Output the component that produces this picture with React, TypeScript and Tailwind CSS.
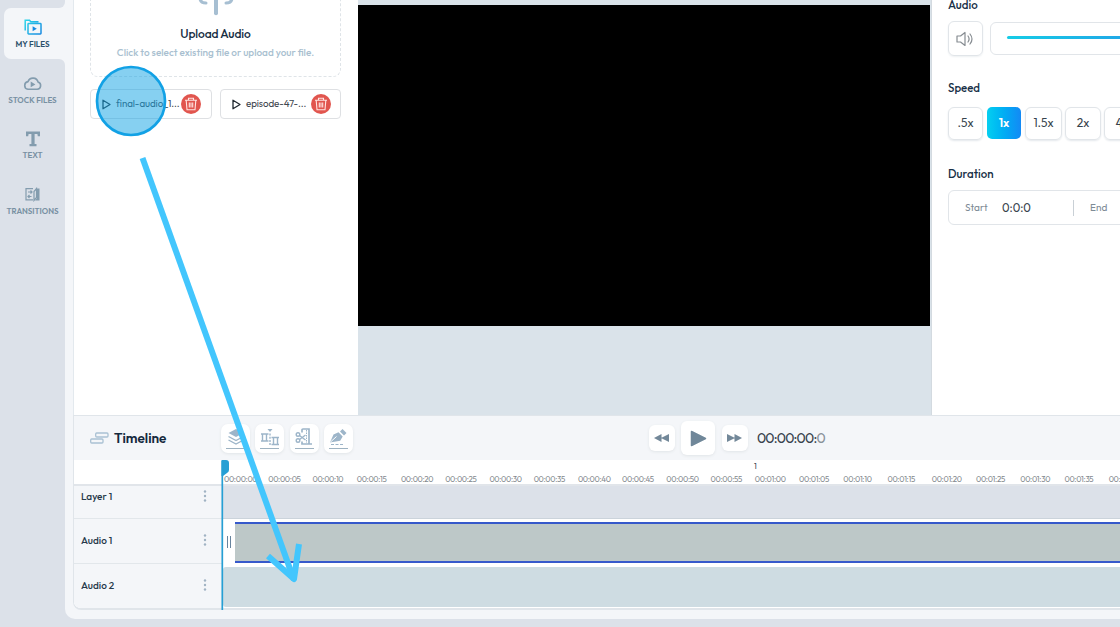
import type { ReactNode } from "react";

const rulerMarks = [
  "00:00:00", "00:00:05", "00:00:10", "00:00:15", "00:00:20", "00:00:25", "00:00:30",
  "00:00:35", "00:00:40", "00:00:45", "00:00:50", "00:00:55", "00:01:00", "00:01:05",
  "00:01:10", "00:01:15", "00:01:20", "00:01:25", "00:01:30", "00:01:35", "00:01:40",
];

function FilesIcon() {
  return (
    <svg width="18" height="16" viewBox="0 0 18 16" fill="none">
      <defs>
        <linearGradient id="files" x1="0" y1="0" x2="18" y2="16" gradientUnits="userSpaceOnUse">
          <stop stopColor="#2fdcea" />
          <stop offset="1" stopColor="#1684e0" />
        </linearGradient>
      </defs>
      <path d="M1.200 11.500V1.200h4.300l1.300 1.500h7.700M4 14.200V5.200q0-.7.700-.7h11.600q.7 0 .7.700v9q0 .7-.7.700H4.700q-.7 0-.7-.7Z" stroke="url(#files)" strokeWidth="1.500" />
      <path d="M8.600 7.200v5l4.200-2.500Z" fill="#1688e2" />
    </svg>
  );
}

function StockIcon() {
  return (
    <svg width="19" height="14" viewBox="0 0 19 14" fill="none">
      <path d="M5 12.300h9.200a3.700 3.700 0 0 0 .9-7.200A5.300 5.300 0 0 0 5 4.600a3.900 3.900 0 0 0 0 7.700Z" stroke="#839cae" strokeWidth="1.600" />
      <path d="M7.700 4.600v5.600l4.700-2.800Z" fill="#839cae" />
    </svg>
  );
}

function TextIcon() {
  return (
    <svg width="14" height="16" viewBox="0 0 14 16" fill="#839cae">
      <path d="M0 .5h14v4.700h-2.200L11.400 3H8.600v10h1.900v2.200h-7V13h1.900V3H2.600l-.4 2.200H0Z" />
    </svg>
  );
}

function TransitionsIcon() {
  return (
    <svg width="15" height="15" viewBox="0 0 15 15" fill="none" stroke="#839cae" strokeWidth="1.200">
      <path d="M8 1.600H1v11.300h7M3 5h4M5.500 3.500 7 5 5.500 6.500M6.500 9.500H3M4.500 8 3 9.500 4.500 11" />
      <path d="M9 13.500v-9l2.500-3v9L9 13.500Z" />
      <path d="M12 1.500h2.500v12H10l2-2.500Z" fill="#839cae" stroke="none" />
    </svg>
  );
}

function SideItem({ icon, label }: { icon: ReactNode; label: string }) {
  return (
    <div className="flex h-[55.5px] flex-col items-center">
      <div className="flex h-4 items-center justify-center">{icon}</div>
      <span className="mt-[3px] text-[8px] leading-[10px] font-semibold whitespace-nowrap text-[#7890a2]">{label}</span>
    </div>
  );
}

function Sidebar() {
  return (
    <aside className="flex h-full w-[65px] shrink-0 flex-col">
      <div className="h-2 rounded-br-[6px] bg-[#dce1e9]" />
      <div className="bg-[#dce1e9] pl-1">
        <div className="flex h-[51px] flex-col items-center rounded-l-[7px] bg-[#f4f6f9] pt-[11px] pr-1">
          <FilesIcon />
          <span className="mt-[4px] text-[8px] leading-[10px] font-semibold whitespace-nowrap text-[#2b506a]">MY FILES</span>
        </div>
      </div>
      <div className="flex-1 rounded-tr-[6px] bg-[#dce1e9] pt-[16.5px]">
        <SideItem icon={<StockIcon />} label="STOCK FILES" />
        <SideItem icon={<TextIcon />} label="TEXT" />
        <SideItem icon={<TransitionsIcon />} label="TRANSITIONS" />
      </div>
    </aside>
  );
}

function AudioFile({ name, className }: { name: string; className: string }) {
  return (
    <div className={`flex h-[30px] items-center rounded-[4px] border border-[#dee0e3] bg-white pl-[11px] ${className}`}>
      <svg width="9" height="11" viewBox="0 0 9 11" fill="none" className="shrink-0">
        <path d="M1 1.200v8.600l7-4.300Z" stroke="#202830" strokeWidth="1.300" strokeLinejoin="round" />
      </svg>
      <span className="ml-[5px] w-[65px] shrink-0 text-[9.8px] tracking-[-0.01em] whitespace-nowrap text-[#3f474f]">{name}</span>
      <span className="flex size-5 shrink-0 items-center justify-center rounded-full bg-[#e1554e]">
        <svg width="14" height="14" viewBox="0 0 14 14" fill="none" stroke="#ffe5e2" strokeWidth="1.100">
          <path d="M1 3.300h12M4.500 3V1.200h5V3M2.200 3.500l.8 9.300h8l.8-9.300M5.300 5.500v5M7 5.500v5M8.700 5.500v5" />
        </svg>
      </span>
    </div>
  );
}

function FilesPanel() {
  return (
    <section className="w-[285px] shrink-0 border-l border-[#e3e9ee] bg-white pl-4">
      <div className="flex h-[77px] w-[251px] flex-col items-center rounded-b-[8px] border border-t-0 border-dashed border-[#dfe4e8]">
        <svg width="38" height="16" viewBox="0 0 38 16" fill="none" stroke="#a7bfd2" strokeWidth="3" strokeLinecap="round">
          <path d="M19-2v15.200" strokeWidth="4" />
          <path d="M3-1c.5 2.500 3 4 6 4M35-1c-.5 2.500-3 4-6 4" />
        </svg>
        <p className="mt-[10px] text-[12px] leading-4 font-medium tracking-[-0.01em] text-[#172e43]">Upload Audio</p>
        <p className="mt-[3px] text-[10px] leading-4 font-medium text-[#a9bfd0]">Click to select existing file or upload your file.</p>
      </div>
      <div className="mt-[12px] flex gap-2">
        <AudioFile name="final-audio_1..." className="w-[122px]" />
        <AudioFile name="episode-47-..." className="w-[121px]" />
      </div>
    </section>
  );
}

const speedButton = "flex h-[33px] shrink-0 items-center justify-center rounded-[6px] border border-[#e1e5e9] text-[12px] text-[#37434d] shadow-[0_1px_2px_#e4e8ec]";

function SettingsPanel() {
  return (
    <section className="flex-1 overflow-hidden border-l border-[#d3dae0] bg-white pl-4 text-[#183047]">
      <h2 className="text-[11.5px] leading-[9px] font-medium">Audio</h2>
      <div className="mt-[12px] flex w-[400px] gap-[7px]">
        <div className="flex size-[35px] items-center justify-center rounded-[6px] border border-[#e1e5e9] shadow-[0_1px_2px_#edf0f2]">
          <svg width="19" height="16" viewBox="0 0 19 16" fill="none" stroke="#868c91" strokeWidth="1.200" strokeLinecap="round" strokeLinejoin="round">
            <path d="M1 5h3.500L9 1.500v13L4.500 11H1ZM12 5q2.200 3 0 6M14 3q4 5 0 10" />
          </svg>
        </div>
        <div className="mt-px flex h-[33px] w-[320px] items-center rounded-[6px] border border-[#e1e5e9] pl-4">
          <div className="mb-[2px] h-[3.500px] w-[270px] rounded-full bg-linear-to-r from-[#16cce6] via-[#22a2e7] to-[#168ee8]" />
        </div>
      </div>
      <h2 className="mt-[24px] text-[11.5px] leading-4 font-medium">Speed</h2>
      <div className="mt-[10.5px] flex w-[400px] gap-[3px]">
        <button className={`${speedButton} w-[35px]`}>.5x</button>
        <button className="mx-px flex h-8 w-[34px] items-center justify-center rounded-[5px] bg-linear-to-r from-[#06cff0] to-[#1389f5] text-[12px] font-semibold text-white">1x</button>
        <button className={`${speedButton} w-[37px]`}>1.5x</button>
        <button className={`${speedButton} w-[36px]`}>2x</button>
        <button className={`${speedButton} w-[36px]`}>4x</button>
      </div>
      <h2 className="mt-[26px] text-[11.5px] leading-4 font-medium">Duration</h2>
      <div className="mt-[8.5px] flex h-[35px] w-[300px] items-center rounded-[6px] border border-[#e1e5e9] pl-4">
        <span className="w-[37px] text-[10px] text-[#7e8b96]">Start</span>
        <span className="w-[71px] text-[11.5px] text-[#37434d]">0:0:0</span>
        <span className="h-4 w-px bg-[#c9d0d6]" />
        <span className="ml-4 text-[10px] text-[#7e8b96]">End</span>
      </div>
    </section>
  );
}

function Tool({ children }: { children: ReactNode }) {
  return (
    <button className="flex size-[29px] flex-col items-center rounded-[7px] bg-white pt-1 shadow-[0_1px_3px_#e1e5e8]">
      <svg width="20" height="18" viewBox="0 0 20 18" fill="none" stroke="#9db5c9" strokeWidth="1.400">
        {children}
      </svg>
      <span className="mt-[2px] h-[1.5px] w-[19px] bg-[#9db2c1]" />
    </button>
  );
}

function TimelineBar() {
  return (
    <div className="flex h-[44px] items-center pl-4">
      <svg width="19" height="13" viewBox="0 0 19 13" fill="none" stroke="#a9c1d3" strokeWidth="1.300">
        <rect x="5.700" y="1" width="12.300" height="4" rx="1" />
        <rect x=".7" y="7" width="12.300" height="4" rx="1" />
      </svg>
      <h1 className="ml-[5px] w-[107px] text-[13.5px] font-semibold text-[#14293d]">Timeline</h1>
      <div className="flex gap-[5.3px]">
        <Tool>
          <path d="m2.500 5 7.500-4 7.500 4-7.500 4Z" fill="#9db5c9" stroke="none" />
          <path d="m2.500 8.500 7.500 4 7.500-4M2.500 12l7.500 4 7.500-4" />
        </Tool>
        <Tool>
          <path d="M7.500 1h5L10 4Z" fill="#9db5c9" stroke="none" />
          <path d="M10 5.500v11.500" strokeDasharray="2 1.200" />
          <path d="M8.500 6h-7.500M8.500 13H1M2.500 6v7M6.500 6v7M11.500 9.500H19M11.500 16.500H19M13.500 9.500v7M17.500 9.500v7" />
        </Tool>
        <Tool>
          <path d="M8 4.500V2q0-1 1-1h6v15h3M15 16H8v-2.500" strokeWidth="1.700" />
          <path d="M12.500 2v13" strokeWidth="1" strokeDasharray="1.500 1" />
          <circle cx="4" cy="6.500" r="1.800" />
          <circle cx="4" cy="12.500" r="1.800" />
          <path d="m5.500 7.500 6 4.500M5.500 11.500l6-4.500" />
        </Tool>
        <Tool>
          <path d="m2 14.500 3.500-8 5-2.200 4.200 4.200-2.500 4.300ZM12 3.500 14.500 1l4 4L16 7.500Z" fill="#9db5c9" stroke="none" />
          <path d="m2.500 14 6-5.500" stroke="#fff" strokeWidth="1" />
          <path d="M3 16.500h13" strokeDasharray="3 1.500" strokeWidth="1.200" />
        </Tool>
      </div>
      <div className="ml-[296px] flex items-center gap-[6.500px]">
        <button className="flex size-[26px] items-center justify-center rounded-[6px] bg-white shadow-[0_1px_3px_#e1e5e8]">
          <svg width="15" height="8" viewBox="0 0 15 8" fill="#738899"><path d="M7.500 0v8L0 4ZM15 0v8L7 4Z" /></svg>
        </button>
        <button className="flex size-[34px] items-center justify-center rounded-[6px] bg-white shadow-[0_1px_3px_#e1e5e8]">
          <svg width="17" height="17" viewBox="0 0 17 17"><path d="M1.500 1.500v14l14-7Z" fill="#708799" stroke="#708799" strokeWidth="1.500" strokeLinejoin="round" /></svg>
        </button>
        <button className="flex size-[26px] items-center justify-center rounded-[6px] bg-white shadow-[0_1px_3px_#e1e5e8]">
          <svg width="15" height="8" viewBox="0 0 15 8" fill="#738899"><path d="M0 0v8l8-4ZM7.500 0v8L15 4Z" /></svg>
        </button>
      </div>
      <span className="ml-[9px] text-[14px] tracking-[-0.055em] text-[#39444e]">00:00:00:<span className="text-[#8a9299]">0</span></span>
    </div>
  );
}

function TrackLabel({ name, className }: { name: string; className: string }) {
  return (
    <div className={`flex w-[149px] shrink-0 items-center border-b border-[#e2e7eb] bg-[#f4f6f9] pl-[7px] text-[10px] font-medium text-[#26394a] ${className}`}>
      <span className="w-[122px]">{name}</span>
      <svg width="4" height="12" viewBox="0 0 4 12" fill="#a0b3c3">
        <circle cx="2" cy="1.500" r="1.200" />
        <circle cx="2" cy="6" r="1.200" />
        <circle cx="2" cy="10.500" r="1.200" />
      </svg>
    </div>
  );
}

function Timeline() {
  return (
    <section className="h-[195px] shrink-0 overflow-hidden rounded-bl-[8px] border-t border-b-2 border-l border-[#e0e5ea]">
      <TimelineBar />
      <div className="h-[26px] border-b-2 border-[#e1e5ea] bg-white pl-[150px]">
        <div className="h-3 pl-[530px] text-[8px] leading-[13px] text-[#39444e]">1</div>
        <div className="flex w-[1000px]">
          {rulerMarks.map((mark) => (
            <span key={mark} className="w-[44.24px] shrink-0 text-[8px] leading-[14px] tracking-[-0.04em] whitespace-nowrap text-[#82888d]">{mark}</span>
          ))}
        </div>
      </div>
      <div className="flex h-[33px]">
        <TrackLabel name="Layer 1" className="pb-[12px]" />
        <div className="flex-1 border-b border-[#cbd3db] bg-[#dce1e9]" />
      </div>
      <div className="flex h-[45px] bg-white">
        <TrackLabel name="Audio 1" className="pb-[2px]" />
        <div className="flex flex-1 pt-[3px]">
          <div className="flex h-[41px] w-[11.5px] items-center justify-center gap-[2px] pb-[2px]">
            <span className="h-3 w-px bg-[#68849e]" />
            <span className="h-3 w-px bg-[#68849e]" />
          </div>
          <div className="h-[41px] flex-1 border-y-2 border-[#3659cb] bg-[#bdc8c8]" />
        </div>
      </div>
      <div className="flex h-[44px] bg-white">
        <TrackLabel name="Audio 2" className="border-b-0 pb-[2px]" />
        <div className="mt-[3px] mb-px flex-1 rounded-l-[3px] bg-[#cedce2]" />
      </div>
    </section>
  );
}

// Playhead, click highlight and drag arrow drawn over the editor
function DragGuide() {
  return (
    <svg className="pointer-events-none absolute inset-0" width="1120" height="627" viewBox="0 0 1120 627" fill="none">
      <path d="M221.500 460h4.500q3 0 3 3v7q0 2-2 3l-4 3h-1.500Z" fill="#279fd4" />
      <path d="M222.300 461v149" stroke="#279fd4" strokeWidth="1.700" />
      <circle cx="131" cy="101" r="34" fill="#17a5e4" fillOpacity=".52" stroke="#12a1e5" strokeWidth="2.700" />
      <path d="m142.500 158 151.500 422" stroke="#43c6fd" strokeWidth="6" />
      <path d="m268 556 26 23 5-35" stroke="#43c6fd" strokeWidth="6" strokeLinejoin="round" />
    </svg>
  );
}

export default function App() {
  return (
    <main className="relative h-[627px] w-[1120px] overflow-hidden bg-[#dce1e9] font-['Outfit','Lato',sans-serif]">
      <div className="flex h-[619px] bg-[#f4f6f9]">
        <Sidebar />
        <div className="flex min-w-0 flex-1 bg-[#dce1e9]">
          <div className="flex min-w-0 flex-1 flex-col rounded-bl-[10px] bg-[#f4f6f9] pl-[8px]">
            <div className="flex h-[415px] shrink-0">
              <FilesPanel />
              <div className="w-[573px] shrink-0 bg-[#dae3ea] pt-[5px]">
                <div className="h-[321px] w-[572px] bg-black" />
              </div>
              <SettingsPanel />
            </div>
            <Timeline />
          </div>
        </div>
      </div>
      <DragGuide />
    </main>
  );
}
